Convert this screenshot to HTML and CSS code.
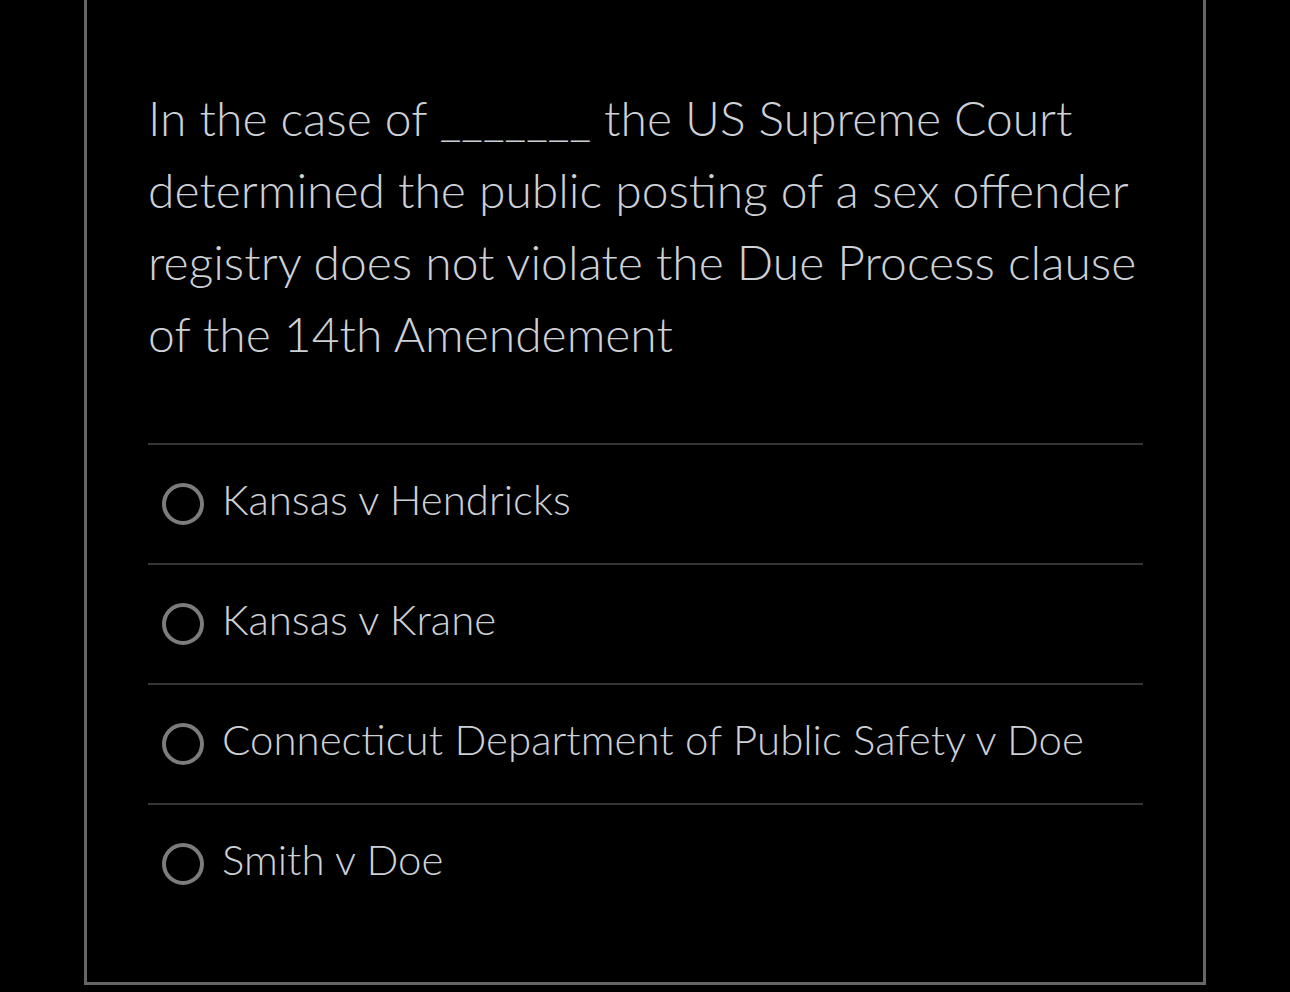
FILE: index.html
```html
<!DOCTYPE html>
<html lang="en">
<head>
<meta charset="utf-8">
<title>Quiz question</title>
<link rel="stylesheet" href="styles.css">
</head>
<body>
<div class="card">
  <p class="question">In the case of _______ the US Supreme Court determined the public posting of a sex offender registry does not violate the Due Process clause of the 14th Amendement</p>
  <ul class="options">
    <li class="option"><span class="radio"></span><span class="label">Kansas v Hendricks</span></li>
    <li class="option"><span class="radio"></span><span class="label">Kansas v Krane</span></li>
    <li class="option"><span class="radio"></span><span class="label">Connecticut Department of Public Safety v Doe</span></li>
    <li class="option"><span class="radio"></span><span class="label">Smith v Doe</span></li>
  </ul>
</div>
</body>
</html>
```
FILE: styles.css
```css
html, body {
  margin: 0;
  padding: 0;
  background: #000;
}
body {
  font-family: "Lato Light", Lato, "Open Sans", sans-serif;
  color: #cdd1d6;
}
.card {
  margin-left: 84px;
  width: 1122px;
  box-sizing: border-box;
  height: 985px;
  border: 3px solid #666;
  border-top: none;
  padding: 82px 60px 0 61px;
}
.question {
  margin: 0;
  font-size: 48px;
  font-weight: 300;
  line-height: 72px;
}
.options {
  list-style: none;
  margin: 73px 0 0;
  padding: 0;
}
.option {
  display: flex;
  align-items: center;
  height: 120px;
  box-sizing: border-box;
  border-top: 2px solid #353535;
  padding-left: 14px;
}
.radio {
  width: 42px;
  height: 42px;
  box-sizing: border-box;
  border: 4px solid #7c7c7c;
  border-radius: 50%;
  flex: none;
}
.label {
  margin-left: 18px;
  margin-bottom: 10px;
  font-size: 42px;
  font-weight: 300;
  line-height: 48px;
}
```
